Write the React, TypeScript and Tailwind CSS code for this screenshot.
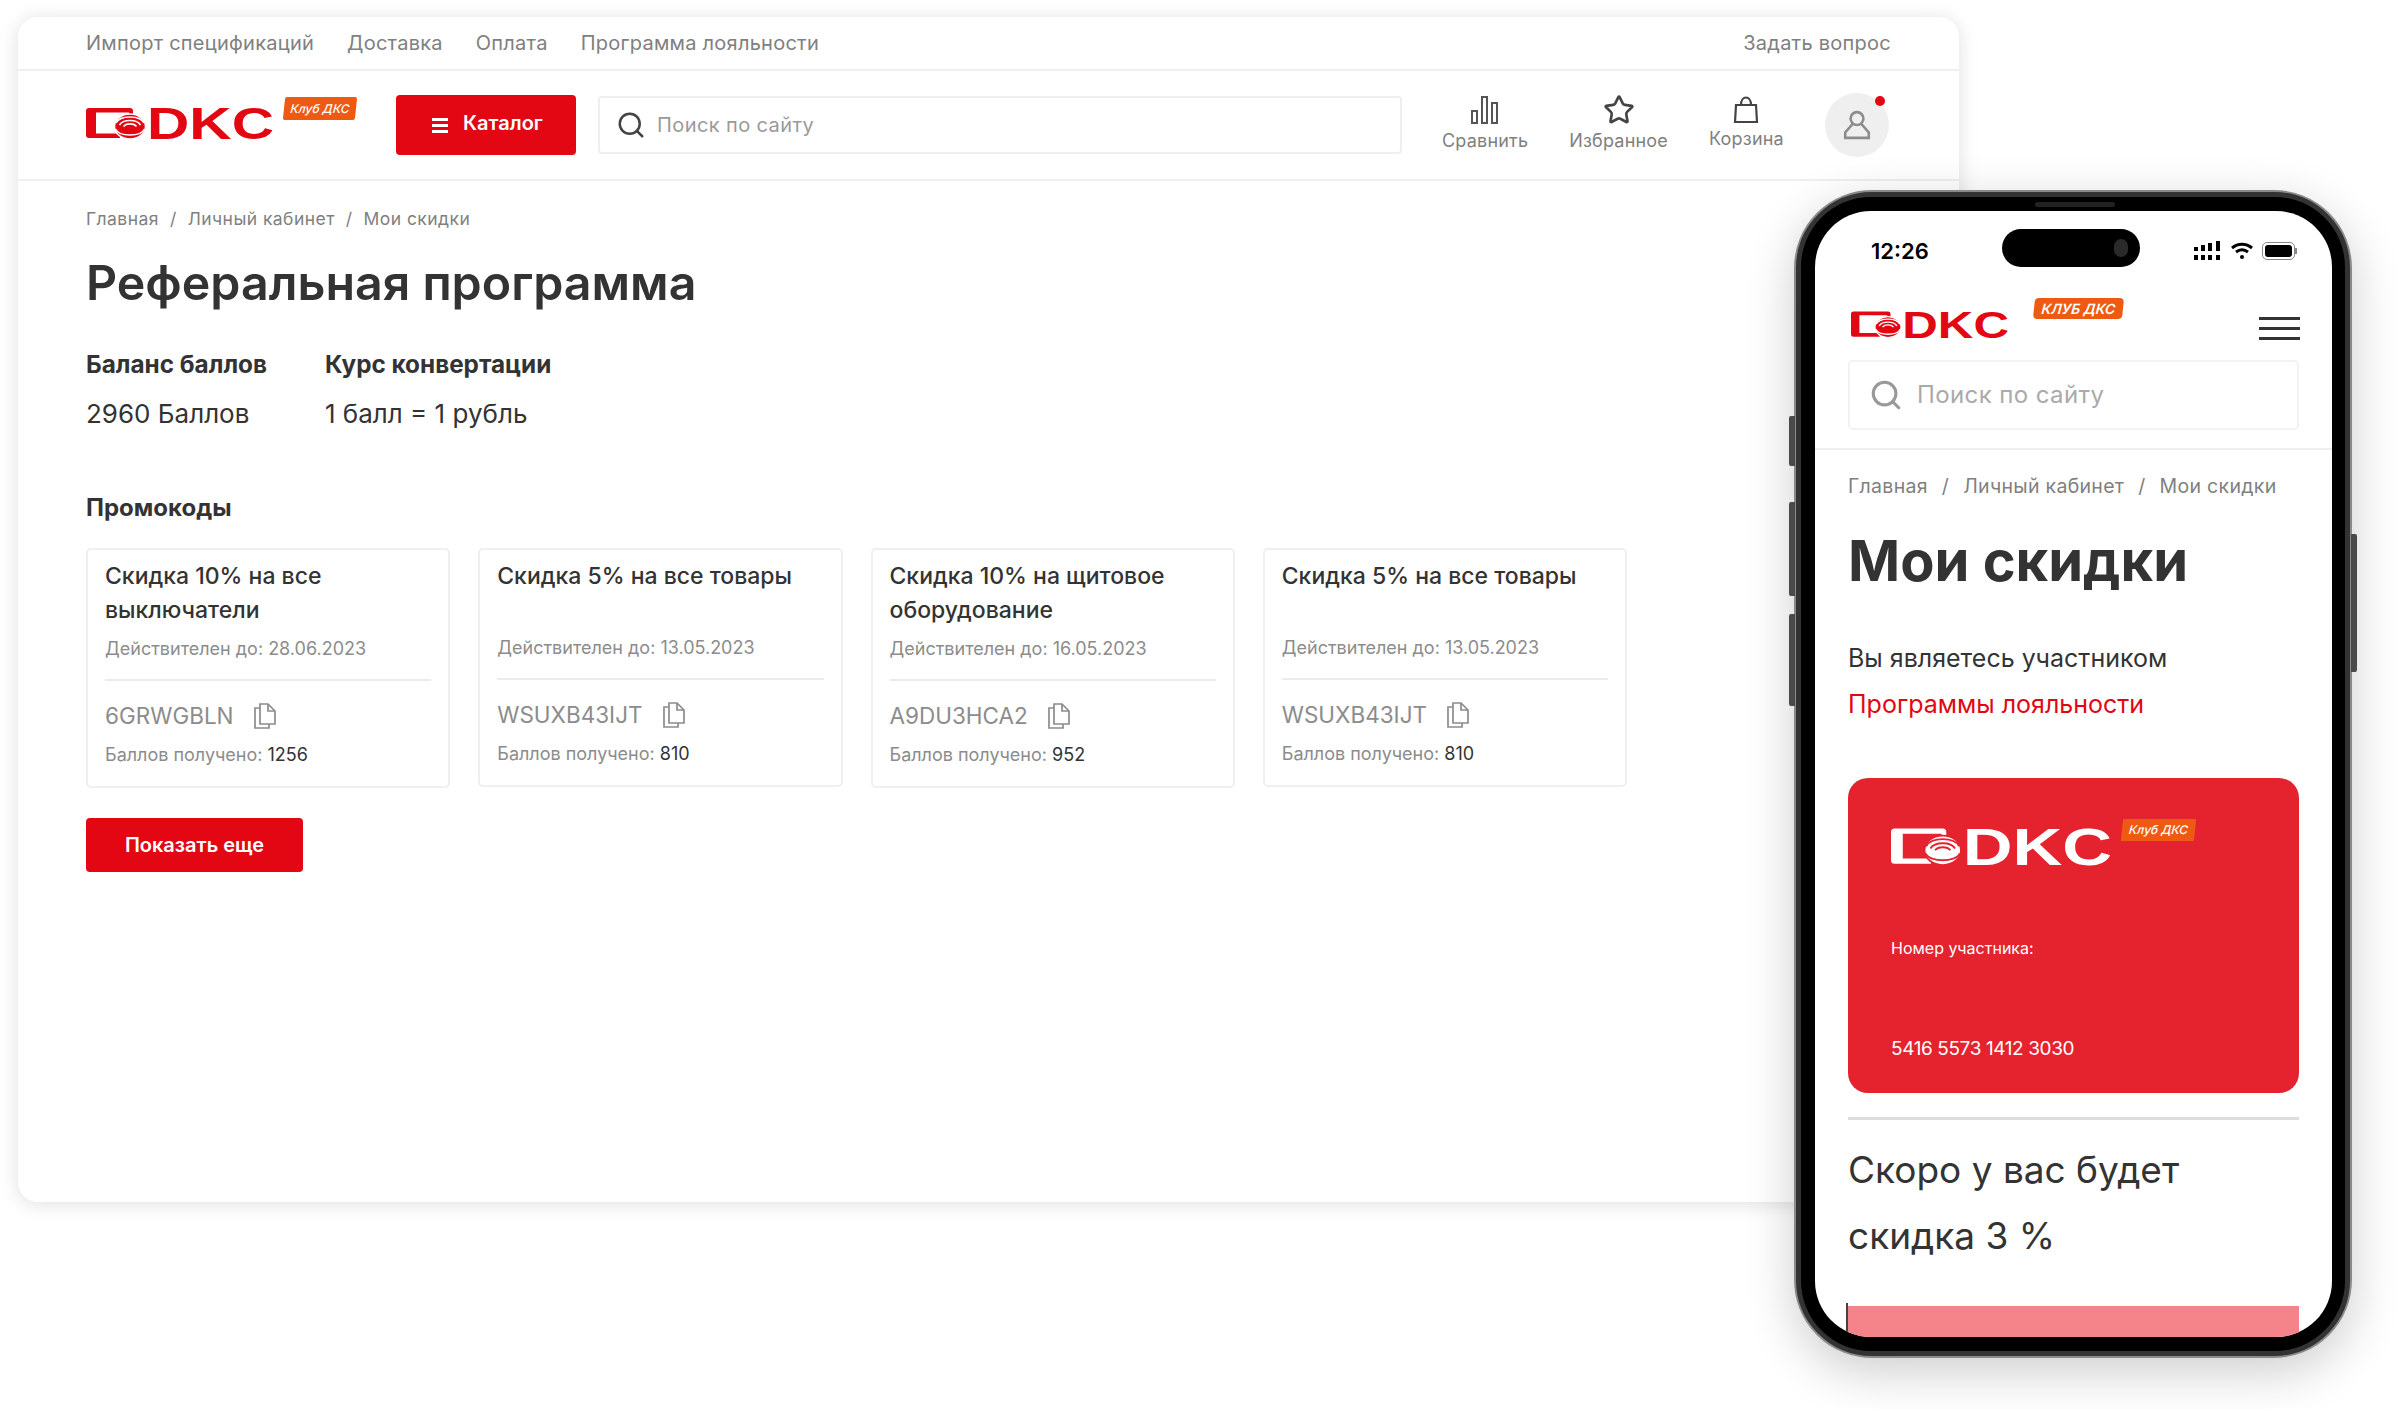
import { Search, Star } from "lucide-react";

const font = "font-['Inter','Noto_Sans',sans-serif]";

const promos = [
  { title: "Скидка 10% на все выключатели", until: "28.06.2023", code: "6GRWGBLN", points: "1256" },
  { title: "Скидка 5% на все товары", until: "13.05.2023", code: "WSUXB43IJT", points: "810" },
  { title: "Скидка 10% на щитовое оборудование", until: "16.05.2023", code: "A9DU3HCA2", points: "952" },
  { title: "Скидка 5% на все товары", until: "13.05.2023", code: "WSUXB43IJT", points: "810" },
];

function Logo({ color, bg, className }: { color: string; bg: string; className: string }) {
  return (
    <svg viewBox="0 -9 188 49" className={className}>
      <path
        fill={color}
        d="M0 3a3 3 0 013-3h41a3 3 0 013 3v5h-4V4.5H10V25.5h24V30H3a3 3 0 01-3-3z"
      />
      <ellipse cx="44" cy="18.5" rx="15.5" ry="12.5" fill={color} stroke={bg} strokeWidth="1.5" />
      <path
        d="M30 15C34 7 54 7 58 15M33.5 17C37 11 51 11 54.5 17M37.5 18.5C40 15 48 15 50.5 18.5M29.5 21C33 29 55 29 58.5 21"
        fill="none"
        stroke={bg}
        strokeWidth="1.6"
      />
      <text
        x="61"
        y="31"
        fill={color}
        fontFamily="'Liberation Sans',sans-serif"
        fontWeight="700"
        fontSize="44"
        textLength="127"
        lengthAdjust="spacingAndGlyphs"
      >
        DKC
      </text>
    </svg>
  );
}

function CopyIcon() {
  return (
    <svg viewBox="0 0 23 26" className="h-[26px] w-[23px]" fill="none" stroke="#8c8c8c" strokeWidth="1.7">
      <path d="M7 1h8l7 7v13H7z" />
      <path d="M15 1v7h7" />
      <path d="M7 5H2v20h14v-4" />
    </svg>
  );
}

function PromoCard({ title, until, code, points }: (typeof promos)[number]) {
  return (
    <div className="rounded-[5px] border-2 border-[#efefef] px-[17px] pt-[9px] pb-[17px]">
      <div className="min-h-[67px] text-[23px] leading-[34px] font-medium text-[#333]">{title}</div>
      <div className="mt-[8px] text-[18px] leading-[28px] text-[#8c8c8c]">Действителен до: {until}</div>
      <div className="mt-[16px] h-[2px] bg-[#ececec]" />
      <div className="mt-[20px] flex items-center gap-[19px] text-[22.5px] leading-[30px] text-[#8c8c8c]">
        {code}
        <CopyIcon />
      </div>
      <div className="mt-[10px] text-[18px] leading-[28px] text-[#8c8c8c]">
        Баллов получено: <span className="text-[#333]">{points}</span>
      </div>
    </div>
  );
}

function Desktop() {
  return (
    <div className="mt-[17px] ml-[18px] h-[1185px] w-[1941px] overflow-hidden rounded-[20px] bg-white shadow-[0_2px_20px_rgba(0,0,0,0.13)]">
      <div className="flex h-[54px] items-center justify-between border-b-2 border-[#efefef] px-[68px] text-[20px] tracking-[0.25px] text-[#808080]">
        <div className="flex gap-[33px]">
          <span>Импорт спецификаций</span>
          <span>Доставка</span>
          <span>Оплата</span>
          <span>Программа лояльности</span>
        </div>
        <span>Задать вопрос</span>
      </div>

      <div className="flex h-[110px] items-center border-b-2 border-[#efefef] pl-[68px]">
        <div className="relative h-[60px] w-[310px]">
          <Logo color="#e30613" bg="#ffffff" className="absolute top-[4px] left-0 w-[188px]" />
          <div className="absolute top-[2px] left-[198px] flex h-[23px] w-[72px] -skew-x-6 items-center justify-center rounded-[2px] bg-[#ee5a12] text-[12px] font-medium whitespace-nowrap text-white italic">
            Клуб ДКС
          </div>
        </div>
        <div className="flex h-[60px] w-[180px] items-center gap-[15px] rounded-[4px] bg-[#e30613] pl-[36px] text-[20px] font-semibold text-white">
          <div className="flex w-[16px] flex-col gap-[3px]">
            <div className="h-[3px] bg-white" />
            <div className="h-[3px] bg-white" />
            <div className="h-[3px] bg-white" />
          </div>
          <span className="-mt-[5px]">Каталог</span>
        </div>
        <div className="ml-[22px] flex h-[58px] w-[804px] items-center rounded-[4px] border-2 border-[#efefef] pl-[16px] text-[20px] tracking-[0.4px] text-[#9a9a9a]">
          <Search size={30} strokeWidth={2} color="#444" />
          <span className="ml-[11px]">Поиск по сайту</span>
        </div>
        <div className="ml-[40px] flex gap-[41px] text-[18px] tracking-[0.2px] text-[#808080]">
          <div className="flex flex-col items-center">
            <svg viewBox="0 0 28 28" className="h-[28px] w-[28px]" fill="none" stroke="#555" strokeWidth="2">
              <rect x="1" y="15" width="5" height="12" />
              <rect x="11" y="1" width="5" height="26" />
              <rect x="21" y="7" width="5" height="20" />
            </svg>
            <span className="mt-[4px] leading-[26px]">Сравнить</span>
          </div>
          <div className="flex flex-col items-center">
            <Star size={32} strokeWidth={2} color="#444" className="-my-[2px]" />
            <span className="mt-[4px] leading-[26px]">Избранное</span>
          </div>
          <div className="flex flex-col items-center">
            <svg viewBox="0 0 28 28" className="h-[28px] w-[28px]" fill="none" stroke="#444" strokeWidth="2.2">
              <path d="M4 9h20l1 17H3z" />
              <path d="M9 9c0-10 10-10 10 0" />
            </svg>
            <span className="mt-[2px] leading-[26px]">Корзина</span>
          </div>
        </div>
        <div className="relative ml-[41px] flex h-[64px] w-[64px] items-center justify-center rounded-full bg-[#efefef]">
          <svg viewBox="0 0 28 28" className="h-[30px] w-[30px]" fill="none" stroke="#8c8c8c" strokeWidth="2.4">
            <circle cx="14" cy="8" r="6" />
            <path d="M10 13L3 21v5h22v-5l-7-8" />
          </svg>
          <div className="absolute top-[3px] right-[4px] h-[10px] w-[10px] rounded-full bg-[#e30613]" />
        </div>
      </div>

      <div className="pl-[68px] text-[#333]">
        <div className="flex gap-[11px] pt-[25px] text-[17.5px] leading-[26px] tracking-[0.45px] text-[#808080]">
          <span>Главная</span>
          <span>/</span>
          <span>Личный кабинет</span>
          <span>/</span>
          <span>Мои скидки</span>
        </div>
        <h1 className="mt-[21px] text-[48.3px] leading-[60px] font-semibold">Реферальная программа</h1>
        <div className="mt-[35px] flex gap-[58px]">
          <div>
            <div className="text-[24.3px] leading-[32px] font-bold">Баланс баллов</div>
            <div className="mt-[18px] text-[26px] leading-[32px]">2960 Баллов</div>
          </div>
          <div>
            <div className="text-[24.3px] leading-[32px] font-bold">Курс конвертации</div>
            <div className="mt-[18px] text-[26px] leading-[32px]">1 балл = 1 рубль</div>
          </div>
        </div>
        <div className="mt-[62px] text-[24px] leading-[32px] font-bold">Промокоды</div>
        <div className="mt-[24px] grid w-[1541px] grid-cols-4 items-start gap-[28px]">
          {promos.map((p, i) => (
            <PromoCard key={i} {...p} />
          ))}
        </div>
        <div className="mt-[30px] flex h-[54px] w-[217px] items-center justify-center rounded-[4px] bg-[#e30613] text-[20px] font-semibold text-white">
          Показать еще
        </div>
      </div>
    </div>
  );
}

function Phone() {
  return (
    <div className="absolute top-[190px] left-[1794px] h-[1168px] w-[558px] rounded-[78px] shadow-[0_14px_50px_rgba(0,0,0,0.2)]">
      {/* side buttons */}
      <div className="absolute top-[226px] -left-[5px] h-[50px] w-[6px] rounded-l-[2px] bg-[#4a4a4a]" />
      <div className="absolute top-[312px] -left-[5px] h-[94px] w-[6px] rounded-l-[2px] bg-[#4a4a4a]" />
      <div className="absolute top-[424px] -left-[5px] h-[92px] w-[6px] rounded-l-[2px] bg-[#4a4a4a]" />
      <div className="absolute top-[344px] -right-[5px] h-[138px] w-[6px] rounded-r-[2px] bg-[#4a4a4a]" />

      <div className="h-full w-full rounded-[78px] border-[2px] border-[#8a8a8a] bg-[#333] p-[5px]">
        <div className="relative h-full w-full rounded-[70px] bg-black p-[14px]">
          <div className="absolute top-[5px] left-[234px] h-[5px] w-[80px] rounded-full bg-[#222]" />
          <div className="relative h-[1126px] w-[517px] overflow-hidden rounded-[56px] bg-white font-['Inter',sans-serif] text-[#333]">
            <div className="absolute top-[18px] left-[187px] flex h-[38px] w-[138px] items-center justify-end rounded-full bg-black pr-[12px]">
              <div className="h-[18px] w-[14px] rounded-full bg-[#2a2a2a]" />
            </div>
            <div className="flex h-[78px] items-center justify-between pt-[2px] pr-[35px] pl-[56px]">
              <span className="text-[22px] font-semibold text-black">12:26</span>
              <div className="flex items-center gap-[8px]">
                <svg viewBox="0 0 28 20" className="h-[20px] w-[28px]" fill="black">
                  <rect x="0" y="6" width="4" height="4" />
                  <rect x="0" y="14" width="4" height="5" />
                  <rect x="7" y="4" width="4" height="6" />
                  <rect x="7" y="14" width="4" height="5" />
                  <rect x="14" y="2" width="4" height="8" />
                  <rect x="14" y="14" width="4" height="5" />
                  <rect x="22" y="0" width="4" height="10" />
                  <rect x="22" y="14" width="4" height="5" />
                </svg>
                <svg viewBox="0 0 24 20" className="h-[20px] w-[24px]" fill="none" stroke="black" strokeWidth="3">
                  <path d="M2 7c6-5 14-5 20 0M6 11c4-3 8-3 12 0" />
                  <circle cx="12" cy="16" r="2" fill="black" stroke="none" />
                </svg>
                <div className="flex items-center">
                  <div className="h-[18px] w-[33px] rounded-[5px] border border-[#888] p-[2px]">
                    <div className="h-full w-full rounded-[3px] bg-black" />
                  </div>
                  <div className="h-[6px] w-[2px] bg-[#888]" />
                </div>
              </div>
            </div>

            <div className="relative h-[71px]">
              <Logo color="#e30613" bg="#ffffff" className="absolute top-[15px] left-[36px] w-[158px]" />
              <div className="absolute top-[9px] left-[219px] flex h-[21px] w-[89px] -skew-x-6 items-center justify-center rounded-[4px] bg-[#ee5a12] text-[14px] font-semibold whitespace-nowrap text-white italic">
                КЛУБ ДКС
              </div>
              <div className="absolute top-[28px] left-[444px] flex w-[41px] flex-col gap-[7px]">
                <div className="h-[3px] bg-[#333]" />
                <div className="h-[3px] bg-[#333]" />
                <div className="h-[3px] bg-[#333]" />
              </div>
            </div>

            <div className="mx-[33px] flex h-[70px] items-center rounded-[5px] border-2 border-[#f2f2f2] pl-[19px] text-[24px] tracking-[0.4px] text-[#aaa]">
              <Search size={34} strokeWidth={2.2} color="#999" />
              <span className="ml-[14px]">Поиск по сайту</span>
            </div>

            <div className="mt-[18px] border-t-2 border-[#efefef] px-[33px]">
              <div className="flex gap-[14px] pt-[22px] text-[19.5px] leading-[28px] tracking-[0.3px] text-[#808080]">
                <span>Главная</span>
                <span>/</span>
                <span>Личный кабинет</span>
                <span>/</span>
                <span>Мои скидки</span>
              </div>
              <h2 className="mt-[25px] text-[56px] leading-[72px] font-bold">Мои скидки</h2>
              <div className="mt-[38px] text-[25px] leading-[46px]">Вы являетесь участником</div>
              <div className="text-[25px] leading-[46px] text-[#e30613]">Программы лояльности</div>

              <div className="mt-[51px] flex h-[315px] flex-col rounded-[20px] bg-[#e4232f] pl-[43px] text-white">
                <div className="relative h-[120px]">
                  <Logo color="#ffffff" bg="#e4232f" className="absolute top-[40px] left-0 w-[221px]" />
                  <div className="absolute top-[41px] left-[231px] flex h-[22px] w-[73px] -skew-x-6 items-center justify-center bg-[#ee5a12] text-[12px] font-medium whitespace-nowrap italic">
                    Клуб ДКС
                  </div>
                </div>
                <div className="mt-[38px] text-[16px] leading-[24px]">Номер участника:</div>
                <div className="mt-[74px] text-[19px] leading-[30px] tracking-[-0.4px]">5416 5573 1412 3030</div>
              </div>

              <div className="mt-[24px] h-[3px] bg-[#ddd]" />
              <div className="mt-[17px] text-[37px] leading-[66px]">
                Скоро у вас будет
                <br />
                скидка 3 %
              </div>
              <div className="relative mt-[37px] h-[40px] bg-[#f4838a]">
                <div className="absolute -top-[3px] -left-[2px] h-[40px] w-[2px] bg-[#444]" />
              </div>
            </div>
          </div>
        </div>
      </div>
    </div>
  );
}

export default function App() {
  return (
    <div className={`relative h-[1409px] w-[2407px] overflow-hidden bg-white ${font}`}>
      <Desktop />
      <Phone />
    </div>
  );
}
